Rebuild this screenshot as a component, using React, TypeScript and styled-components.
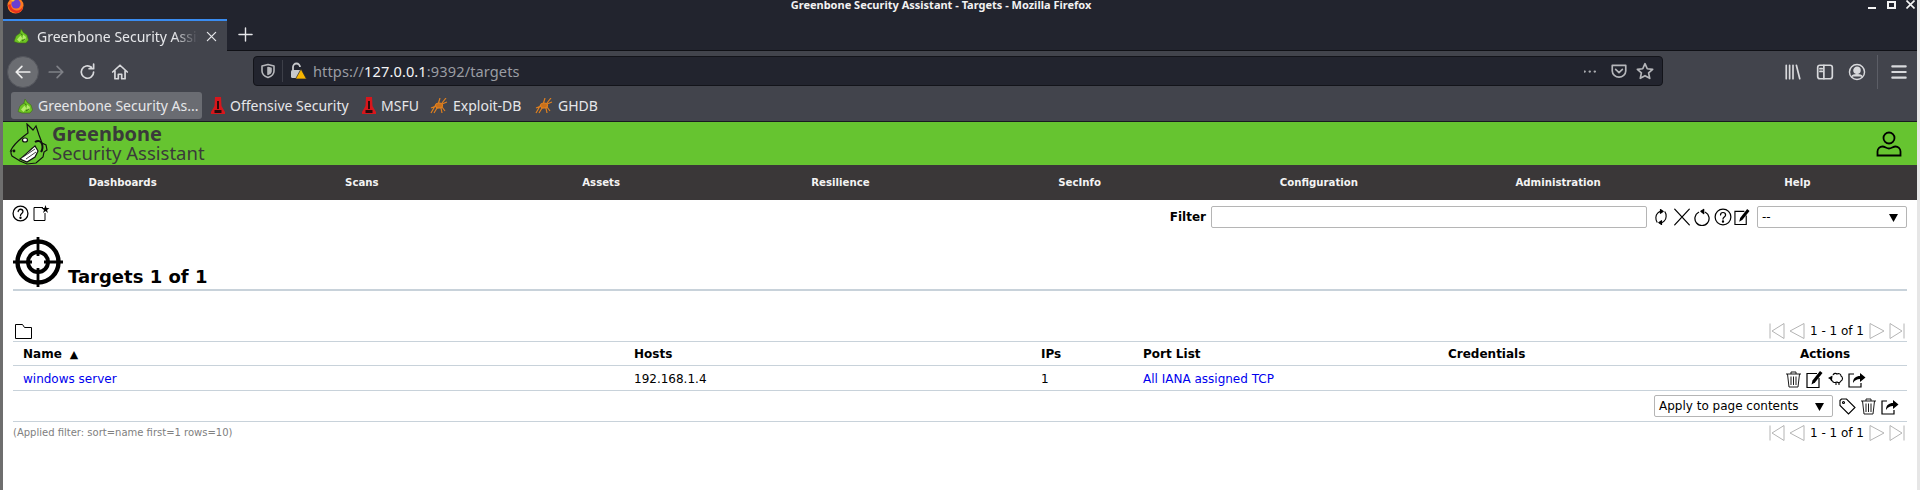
import React from "react";
import styled, { createGlobalStyle } from "styled-components";

const Global = createGlobalStyle`
  html, body { margin: 0; padding: 0; background: #fff; }
  body { font-family: "DejaVu Sans", sans-serif; overflow: hidden; }
  * { box-sizing: border-box; }
`;

const Frame = styled.div`
  width: 1920px; height: 490px; overflow: hidden; background: #fff;
  border-left: 3px solid #6e6e6e; border-right: 3px solid #e6e6e6;
  display: flex; flex-direction: column;
`;

/* ---- browser chrome ---- */
const TitleBar = styled.div`
  height: 19px; background: #22242e; display: flex; align-items: flex-start; flex: none; overflow: hidden;
`;
const LogoSlot = styled.div`width: 786px; flex: none; padding-left: 4px; height: 19px; overflow: hidden;`;
const WindowTitle = styled.div`
  font: 700 11px/10px "Noto Sans", sans-serif; color: #f2f2f2; width: 304px; text-align: center; white-space: nowrap;
`;
const WindowControls = styled.div`
  margin-left: auto; display: flex; gap: 10px; padding-right: 2px; align-items: center;
`;
const TabBar = styled.div`
  height: 32px; background: #22242e; display: flex; align-items: stretch; flex: none; border-bottom: 1px solid #101116;
`;
const Tab = styled.div`
  width: 224px; height: 32px; background: #42444c; border-top: 2px solid #3a8cf0; display: flex; align-items: center;
  padding: 0 10px 0 10px; gap: 8px; color: #e6e7ea; font: 14px "Noto Sans", sans-serif; flex: none;
`;
const TabLabel = styled.span`
  flex: 1; white-space: nowrap; overflow: hidden;
  -webkit-mask-image: linear-gradient(90deg, #000 85%, transparent);
  mask-image: linear-gradient(90deg, #000 85%, transparent);
`;
const NewTab = styled.div`width: 36px; display: flex; align-items: center; justify-content: center;`;
const NavBar = styled.div`
  height: 41px; background: #42444c; display: flex; align-items: center; flex: none; padding-left: 4px;
`;
const BackButton = styled.div`
  width: 32px; height: 32px; border-radius: 50%; background: #6b6d72; border: 1px solid #53555c; display: flex; align-items: center; justify-content: center; flex: none;
`;
const ToolSlot = styled.div<{ $w: number }>`
  width: ${(p) => p.$w}px; flex: none; height: 28px; display: flex; align-items: center; justify-content: center;
`;
const UrlBar = styled.div`
  width: 1410px; height: 30px; margin-left: 115.5px; background: #22242e; border: 1px solid #13141a; border-radius: 4px; flex: none;
  display: flex; align-items: center; padding-left: 6px; padding-right: 8px; margin-top: -1px;
  font: 14.6px "Noto Sans", sans-serif; color: #9a9ca3;
`;
const UrlDivider = styled.div`width: 1px; height: 22px; background: #3d3f48; margin: 0 6px 0 6px;`;
const UrlText = styled.div`margin-left: 6px; white-space: nowrap; letter-spacing: 0.1px;`;
const Host = styled.span`color: #f4f4f6;`;
const UrlEnd = styled.div`margin-left: auto; display: flex; align-items: center; gap: 8px;`;
const RightTools = styled.div`margin-left: 114px; display: flex; align-items: center;`;
const ToolSep = styled.div`width: 1px; height: 34px; background: #5c5e66; margin: 0 10px 0 4px;`;
const BookmarkBar = styled.div`
  height: 30px; background: #42444c; flex: none; display: flex; align-items: flex-start; padding-left: 8px; gap: 3px;
  border-bottom: 1px solid #181a20; color: #e6e7ea; font: 14px "Noto Sans", sans-serif;
`;
const Bookmark = styled.div<{ $w: number; $active?: boolean }>`
  width: ${(p) => p.$w}px; height: 27px; display: flex; align-items: center; gap: 5px; padding-left: 6px; flex: none; white-space: nowrap;
  border-radius: 3px; background: ${(p) => (p.$active ? "#6a6c72" : "transparent")};
`;

/* ---- Greenbone header ---- */
const GreenHeader = styled.header`
  height: 43px; background: #66c430; flex: none; display: flex; align-items: center; padding: 0 15px 0 6px;
`;
const BrandText = styled.div`
  margin-left: 3px; margin-top: -2px; color: #3a3a3a; font-family: "Noto Sans", sans-serif; display: flex; flex-direction: column;
`;
const BrandMain = styled.div`font-size: 20px; font-weight: 700; line-height: 20px;`;
const BrandSub = styled.div`font-size: 18.5px; line-height: 18px;`;
const UserSlot = styled.div`margin-left: auto; display: flex;`;
const MainMenu = styled.nav`
  height: 35px; background: #3a3738; flex: none; display: grid; grid-template-columns: repeat(8, 1fr); align-items: center;
`;
const MenuItem = styled.div`
  color: #f3f3f3; font-size: 10.2px; font-weight: 700; text-align: center;
`;

/* ---- page ---- */
const Page = styled.main`flex: 1; padding: 0 10px; color: #000;`;
const ToolRow = styled.div`display: flex; align-items: flex-start; height: 31px; padding-top: 5px;`;
const ToolLeft = styled.div`display: flex; gap: 4px; margin-left: -1px;`;
const FilterGroup = styled.div`margin-left: auto; display: flex; align-items: center; padding-top: 1px;`;
const FilterLabel = styled.label`font-size: 12px; font-weight: 700; margin-right: 5px;`;
const FilterInput = styled.div`
  width: 436px; height: 22px; border: 1px solid #b5b5b5; border-radius: 2px; background: #fff; margin-right: 5px;
`;
const FilterIcons = styled.div`display: flex; gap: 2.5px; margin-right: 7px; align-items: center;`;
const SelectBox = styled.div<{ $w: number }>`
  width: ${(p) => p.$w}px; height: 22px; border: 1px solid #b5b5b5; border-radius: 2px; background: #fff;
  display: flex; align-items: center; justify-content: space-between; padding: 0 7px 0 4px; font-size: 12px; white-space: nowrap; flex: none;
`;
const TitleRow = styled.div`
  display: flex; align-items: flex-end; height: 60px; border-bottom: 2px solid #c8d2da; padding-bottom: 2px; gap: 5px;
`;
const PageTitle = styled.h1`font-size: 18px; font-weight: 700; margin: 0 0 -1px; line-height: 22px;`;
const ListBar = styled.div`
  margin-top: 31px; height: 18px; display: flex; justify-content: space-between; align-items: center; padding: 0 2px 0 2px;
`;
const Pager = styled.div`display: flex; align-items: center; gap: 4.5px; font-size: 12px; color: #000; white-space: nowrap;`;
const Table = styled.table`
  width: 1894px; border-collapse: collapse; table-layout: fixed; font-size: 12px;
  border-top: 1px solid #c8d2da; margin-top: 1px;
`;
const Th = styled.th<{ $center?: boolean }>`
  height: 24px; padding: 1px 10px 0; text-align: ${(p) => (p.$center ? "center" : "left")}; font-weight: 700; border-bottom: 1px solid #c8d2da; font-size: 12px;
`;
const Td = styled.td`height: 25px; padding: 2px 10px 0; border-bottom: 1px solid #c8d2da;`;
const LinkText = styled.span`color: #0000ee;`;
const SortMark = styled.span`margin-left: 8px; font-size: 11px;`;
const ActionIcons = styled.div`display: flex; justify-content: center; gap: 4px; align-items: center;`;
const BulkTd = styled.td`height: 31px; padding: 0 8px 0 0; border-bottom: 1px solid #c8d2da;`;
const BulkRow = styled.div`display: flex; justify-content: flex-end; align-items: center; gap: 4px;`;
const BulkIcons = styled.div`display: flex; align-items: center; gap: 4px; margin-left: 2px;`;
const FootRow = styled.div`display: flex; justify-content: space-between; align-items: center; height: 18px; padding-right: 2px; margin-top: 2px;`;
const FilterNote = styled.div`font-size: 10px; color: #808080; white-space: nowrap; margin-top: -2px;`;

/* ---- icons ---- */
type SP = { s?: number; c?: string };
const Svg = ({ s = 16, c = "#000", children, w = 1.3 }: SP & { children: React.ReactNode; w?: number }) => (
  <svg width={s} height={s} viewBox="0 0 16 16" fill="none" stroke={c} strokeWidth={w} strokeLinecap="round" strokeLinejoin="round" style={{ flex: "none" }}>
    {children}
  </svg>
);
const FirefoxLogo = () => (
  <svg width="17" height="17" viewBox="0 0 17 17" style={{ marginTop: -3, display: "block" }}>
    <circle cx="8.5" cy="8.5" r="8" fill="#ff7a1f" />
    <circle cx="9" cy="7" r="4.6" fill="#6a3fd0" />
    <path d="M1 8c1 6 6 8 9 8s6-3 6-7c-1 3-4 5-7 4.500S4 11 3.500 7z" fill="#e8321f" />
    <path d="M3 2c3-2 8-2 10 1-3-1-6 0-7 2z" fill="#ffbf2c" />
  </svg>
);
const Favicon = () => (
  <svg width="16" height="16" viewBox="0 0 16 16" style={{ flex: "none" }}>
    <path d="M1 13.500 3 8l4-3 1-4 2.500 3.500L14 7l1.500 5-2.500 3H5z" fill="#6cc322" stroke="#3c6a1a" strokeWidth="0.600" />
    <path d="M4 11.500l3.500-4 2 3-3 3.500zM10 6.500l3 2.500-1 3.500-2.500-1.500z" fill="#b4ea6a" />
    <path d="M7.500 5.500l2 1.500M9 13l3-2" stroke="#2d5312" strokeWidth="0.800" fill="none" />
  </svg>
);
const Tower = () => (
  <svg width="14" height="18" viewBox="0 0 14 18" style={{ flex: "none" }}>
    <path d="M4 0h6l.5 9 3.500 6v2H0v-2l3.500-6z" fill="#d8161c" />
    <path d="M6 4h2v8H6zM3.500 13h7v3h-7z" fill="#2a0c0c" />
  </svg>
);
const Spider = () => (
  <svg width="18" height="16" viewBox="0 0 18 16" fill="none" stroke="#e0801f" strokeWidth="1.200" style={{ flex: "none" }}>
    <path d="M1 15 5 8l5-2M1 10l5-2M4 15l3-5 4-1M16 0l-4 5M10 0 8.500 5M17 4l-5 2M12 9l3 4M11 10l1 5" />
    <ellipse cx="9" cy="7.500" rx="3.500" ry="2.500" fill="#c9701a" />
  </svg>
);
const Tool = ({ d, w = 1.5, c = "#d8d9dc", s = 18 }: { d: string; w?: number; c?: string; s?: number }) => (
  <Svg s={s} c={c} w={w}><path d={d} /></Svg>
);
const Shield = () => <Svg s={16} c="#b5b6ba" w={1.6}><path d="M8 1.500 14 3v5c0 3.500-3 5.500-6 6.500C5 13.500 2 11.500 2 8V3z" /><path d="M8 4.500 11 5.200v3c0 1.500-1.500 2.500-3 3.200z" fill="#b5b6ba" /></Svg>;
const Lock = () => (
  <svg width="18" height="18" viewBox="0 0 18 18" style={{ flex: "none" }}>
    <path d="M4 8V5a3.500 3.500 0 0 1 7 0" fill="none" stroke="#c8c9cc" strokeWidth="1.800" />
    <rect x="2" y="8" width="11" height="8" rx="1.500" fill="#c8c9cc" />
    <path d="M12 7l5.500 10h-11z" fill="#f7b500" stroke="#22242e" strokeWidth="0.700" />
  </svg>
);
const Help = ({ s = 17, w = 1.2 }: { s?: number; w?: number }) => (
  <Svg s={s} w={w}>
    <circle cx="8" cy="8" r="7" />
    <path d="M5.800 6.200C5.800 4.800 7 4 8 4s2.300.8 2.300 2.200C10.300 8 8 8 8 9.800" />
    <circle cx="8" cy="12" r="0.500" fill="#000" />
  </Svg>
);
const NewIcon = () => (
  <svg width="17" height="16" viewBox="0 0 17 16" fill="none" style={{ flex: "none" }}>
    <path d="M10 2.500H1v13h11V8" stroke="#000" strokeWidth="1" />
    <path d="M12.500 0l1 3h3l-2.500 2 1 3-2.500-2-2.500 2 1-3L8.500 3h3z" fill="#000" />
  </svg>
);
const Refresh = () => <Svg s={18} w={1}><path d="M4.500 12.500C3 10.500 3 6.500 5 4.500 6 3.500 7 3 8 3" /><path d="M11.500 3.500c1.500 2 1.500 6-.5 8C10 12.500 9 13 8 13" /><path d="M7.500 1.300 10 3 7.500 4.700z" fill="#000" /><path d="M8.500 14.700 6 13l2.500-1.700z" fill="#000" /></Svg>;
const Cross = () => <Svg s={18} w={1.1}><path d="M1.500 1 14.500 15M14.500 1 1.500 15" /></Svg>;
const Reset = () => <Svg s={18} w={1.1}><path d="M5 3.800A6.300 6.300 0 1 0 11 3.800" /><path d="M9.500 1.300 7 3l2.500 2z" fill="#000" /></Svg>;
const Edit = ({ s = 17 }: { s?: number }) => (
  <svg width={s} height={s} viewBox="0 0 17 17" fill="none" style={{ flex: "none" }}>
    <path d="M11 2.500H1v14h12V7" stroke="#000" strokeWidth="1.200" />
    <path d="M14 0l2.500 2L9 11.500 5.500 13.500 6.500 9.500z" fill="#000" />
  </svg>
);
const Trash = ({ s = 17 }: { s?: number }) => (
  <svg width={s} height={s} viewBox="0 0 17 17" fill="none" stroke="#1a1a1a" strokeWidth="1" style={{ flex: "none" }}>
    <path d="M1 3h15M6 3V1h5v2M2.500 3l1.500 13h9l1.500-13M6 5.500V14M8.500 5.500V14M11 5.500V14" />
  </svg>
);
const Sheep = () => (
  <svg width="17" height="14" viewBox="0 0 17 14" fill="none" stroke="#000" strokeWidth="1.100" style={{ flex: "none" }}>
    <path d="M6 3c1-2 3-2 4-1 2-1 4 0 4 2 2 1 2 4 0 5-1 2-3 2-4 1-2 1-4 .5-4.500-1-1 0-1.500-1-1.500-2" />
    <path d="M5.500 3.500 1 6l4 2.500z" fill="#000" stroke="none" />
    <path d="M9 11v2M12 11v2" />
  </svg>
);
const Export = ({ s = 18 }: { s?: number }) => (
  <svg width={s} height={s} viewBox="0 0 18 18" fill="none" style={{ flex: "none" }}>
    <path d="M6 4H1v13h12v-4" stroke="#000" strokeWidth="1.200" />
    <path d="M5 13c0-5 3-7 7-7V3l5.500 4.500L12 12V9c-3 0-5 1-7 4z" fill="#000" />
  </svg>
);
const Tag = () => (
  <svg width="17" height="17" viewBox="0 0 17 17" fill="none" stroke="#000" strokeWidth="1.100" style={{ flex: "none" }}>
    <path d="M1 2.500 2.500 1h5L16 9.500 9.500 16 1 7.500z" />
    <circle cx="4.500" cy="4.500" r="1" />
  </svg>
);
const Target = () => (
  <svg width="50" height="50" viewBox="0 0 50 50" fill="none" stroke="#000" style={{ flex: "none" }}>
    <circle cx="25" cy="25" r="20.500" strokeWidth="4.400" />
    <circle cx="25" cy="25" r="10" strokeWidth="4" />
    <path d="M25 0v19M25 31v19M0 25h19M31 25h19" strokeWidth="2.800" />
  </svg>
);
const Folder = () => (
  <svg width="17" height="15" viewBox="0 0 17 15" fill="none" stroke="#000" strokeWidth="1" style={{ flex: "none" }}>
    <path d="M.5 14.500V.5h7l2 3h7v11z" />
  </svg>
);
const PageIcon = ({ dir, end }: { dir: "l" | "r"; end?: boolean }) => (
  <svg width="16" height="16" viewBox="0 0 16 16" fill="none" stroke="#b4b4b4" strokeWidth="1" style={{ flex: "none", transform: dir === "r" ? "scaleX(-1)" : undefined }}>
    {end ? <path d="M1 .5v15M15 .5v15L3 8z" /> : <path d="M15 .5v15L1 8z" />}
  </svg>
);
const Caret = () => (
  <svg width="11" height="11" viewBox="0 0 11 11" style={{ flex: "none" }}>
    <path d="M1 2h9L5.500 10z" fill="#000" />
  </svg>
);
const User = () => (
  <svg width="26" height="26" viewBox="0 0 26 26" fill="none" stroke="#000" strokeWidth="1.800">
    <circle cx="13" cy="7" r="5.500" />
    <path d="M1.500 24.500v-4c0-3 2.500-5 5-5 2.500 0 4 2 6.500 2s4-2 6.500-2 5 2 5 5v4z" />
  </svg>
);
const Dog = () => (
  <svg width="40" height="42" viewBox="0 0 40 42" fill="none" stroke="#111" strokeWidth="1.200" style={{ flex: "none" }}>
    <path d="M1.500 28C4 22 10 17 15 13l4-3-1-9 5 5 1 1 3-4 3 9 3 8 4 2 1 5-3 2-1 5-7 6-9 1-7-3-8-5c-1-2-1.500-4-.5-5z" fill="#66c430" />
    <ellipse cx="16" cy="17" rx="2.500" ry="2" fill="#fff" />
    <path d="M11 36c4-3 10-9 15-13l3 5-3 6-8 5z" fill="#fff" />
    <path d="M14 34 26 26M17 36l10-7" strokeWidth="0.800" />
    <path d="M26 19c3-2 6-1 7 2s1 5-1 8" strokeWidth="2" />
    <circle cx="5" cy="28" r="0.800" fill="#111" />
  </svg>
);
const WinMin = () => <svg width="9" height="9" viewBox="0 0 9 9"><path d="M0 7h8v2H0z" fill="#f4f4f4" /></svg>;
const WinMax = () => <svg width="9" height="9" viewBox="0 0 9 9" fill="none" stroke="#f4f4f4" strokeWidth="2"><path d="M1 2h7v6H1z" /></svg>;
const WinClose = () => <svg width="9" height="9" viewBox="0 0 9 9" fill="none" stroke="#f4f4f4" strokeWidth="1.600"><path d="M.5.500l8 8M8.500.5l-8 8" /></svg>;

const MENU = ["Dashboards", "Scans", "Assets", "Resilience", "SecInfo", "Configuration", "Administration", "Help"];

const Pagination = () => (
  <Pager>
    <PageIcon dir="l" end />
    <PageIcon dir="l" />
    <span>1 - 1 of 1</span>
    <PageIcon dir="r" />
    <PageIcon dir="r" end />
  </Pager>
);

export default function App() {
  return (
    <Frame>
      <Global />
      <TitleBar>
        <LogoSlot><FirefoxLogo /></LogoSlot>
        <WindowTitle>Greenbone Security Assistant - Targets - Mozilla Firefox</WindowTitle>
        <WindowControls><WinMin /><WinMax /><WinClose /></WindowControls>
      </TitleBar>
      <TabBar>
        <Tab>
          <Favicon />
          <TabLabel>Greenbone Security Assistant</TabLabel>
          <Svg s={11} c="#e6e7ea" w={1.800}><path d="M2 2l12 12M14 2 2 14" /></Svg>
        </Tab>
        <NewTab><Svg s={15} c="#e6e7ea" w={1.500}><path d="M8 1v14M1 8h14" /></Svg></NewTab>
      </TabBar>
      <NavBar>
        <BackButton><Tool d="M14 8H2M7 3 2 8l5 5" c="#eee" /></BackButton>
        <ToolSlot $w={34.5}><Tool d="M2 8h12M9 3l5 5-5 5" c="#7f8187" /></ToolSlot>
        <ToolSlot $w={29}><Tool d="M13 8a5.500 5.500 0 1 1-2-4.200M13 1v4h-4" /></ToolSlot>
        <ToolSlot $w={35}><Tool d="M1.500 8 8 2l6.500 6M3.500 7v7h3v-4h3v4h3V7" /></ToolSlot>
        <UrlBar>
          <Shield />
          <UrlDivider />
          <Lock />
          <UrlText>https://<Host>127.0.0.1</Host>:9392/targets</UrlText>
          <UrlEnd>
            <Svg s={18} c="#aaacb0" w={2}><path d="M0.500 8.500h.2M5 8.500h.2M9.500 8.500h.2" /></Svg>
            <Svg s={18} c="#b5b6ba" w={1.500}><path d="M2 3h12v5c0 3-3 5.500-6 5.500S2 11 2 8z" /><path d="M5 6.500 8 9.500l3-3" /></Svg>
            <Svg s={18} c="#b5b6ba" w={1.500}><path d="M8 1.500l2 4.500 4.800.5-3.600 3.200 1 4.800L8 12.200l-4.200 2.300 1-4.800L1.200 6.500 6 6z" /></Svg>
          </UrlEnd>
        </UrlBar>
        <RightTools>
          <ToolSlot $w={32}><Tool d="M2 2v12M5 2v12M8 2v12M11 2l3 12" /></ToolSlot>
          <ToolSlot $w={32}>
            <Svg s={18} c="#d8d9dc" w={1.500}><rect x="1.500" y="2" width="13" height="12" rx="2" /><path d="M7 2v12" /><path d="M3.500 5h2M3.500 7.500h2" /></Svg>
          </ToolSlot>
          <ToolSlot $w={32}>
            <Svg s={18} c="#d8d9dc" w={1.300}><circle cx="8" cy="8" r="6.700" /><circle cx="8" cy="6.500" r="2.700" fill="#d8d9dc" /><path d="M3.500 12c1-2 8-2 9 0" fill="#d8d9dc" /></Svg>
          </ToolSlot>
          <ToolSep />
          <ToolSlot $w={22}><Tool d="M2 3h12M2 8h12M2 13h12" w={1.800} /></ToolSlot>
        </RightTools>
      </NavBar>
      <BookmarkBar>
        <Bookmark $w={191} $active><Favicon />Greenbone Security As...</Bookmark>
        <Bookmark $w={148}><Tower />Offensive Security</Bookmark>
        <Bookmark $w={65}><Tower />MSFU</Bookmark>
        <Bookmark $w={102}><Spider />Exploit-DB</Bookmark>
        <Bookmark $w={70}><Spider />GHDB</Bookmark>
      </BookmarkBar>

      <GreenHeader>
        <Dog />
        <BrandText>
          <BrandMain>Greenbone</BrandMain>
          <BrandSub>Security Assistant</BrandSub>
        </BrandText>
        <UserSlot><User /></UserSlot>
      </GreenHeader>
      <MainMenu>
        {MENU.map((m) => <MenuItem key={m}>{m}</MenuItem>)}
      </MainMenu>

      <Page>
        <ToolRow>
          <ToolLeft><Help /><NewIcon /></ToolLeft>
          <FilterGroup>
            <FilterLabel>Filter</FilterLabel>
            <FilterInput />
            <FilterIcons><Refresh /><Cross /><Reset /><Help s={18} w={1.100} /><Edit s={16} /></FilterIcons>
            <SelectBox $w={150}>--<Caret /></SelectBox>
          </FilterGroup>
        </ToolRow>
        <TitleRow>
          <Target />
          <PageTitle>Targets 1 of 1</PageTitle>
        </TitleRow>
        <ListBar><Folder /><Pagination /></ListBar>
        <Table>
          <colgroup>
            <col width={611} /><col width={407} /><col width={102} /><col width={305} /><col width={305} /><col width={164} />
          </colgroup>
          <thead>
            <tr>
              <Th>Name<SortMark>▲</SortMark></Th>
              <Th>Hosts</Th>
              <Th>IPs</Th>
              <Th>Port List</Th>
              <Th>Credentials</Th>
              <Th $center>Actions</Th>
            </tr>
          </thead>
          <tbody>
            <tr>
              <Td><LinkText>windows server</LinkText></Td>
              <Td>192.168.1.4</Td>
              <Td>1</Td>
              <Td><LinkText>All IANA assigned TCP</LinkText></Td>
              <Td />
              <Td><ActionIcons><Trash /><Edit /><Sheep /><Export /></ActionIcons></Td>
            </tr>
            <tr>
              <BulkTd colSpan={6}>
                <BulkRow>
                  <SelectBox $w={179}>Apply to page contents<Caret /></SelectBox>
                  <BulkIcons><Tag /><Trash /><Export /></BulkIcons>
                </BulkRow>
              </BulkTd>
            </tr>
          </tbody>
        </Table>
        <FootRow>
          <FilterNote>(Applied filter: sort=name first=1 rows=10)</FilterNote>
          <Pagination />
        </FootRow>
      </Page>
    </Frame>
  );
}
